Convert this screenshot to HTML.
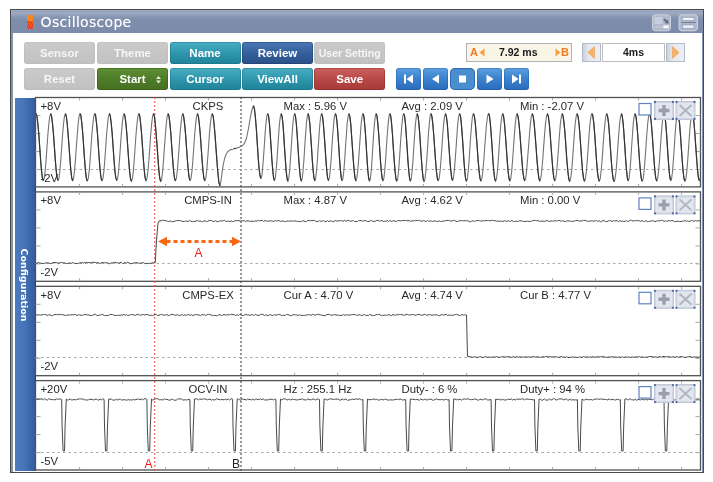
<!DOCTYPE html>
<html><head><meta charset="utf-8"><title>Oscilloscope</title><style>
*{margin:0;padding:0;box-sizing:border-box}
html,body{width:713px;height:482px;background:#fff;overflow:hidden}
body{position:relative;font-family:"Liberation Sans", Arial, sans-serif;}
#frame{position:absolute;left:10px;top:9px;width:694px;height:464px;border:1px solid #4a4a4a;background:#fff}
#frame .inner{position:absolute;left:0;top:0;right:0;bottom:0;border:2px solid #8493b0;border-bottom-width:0;border-right-width:1px}
#title{position:absolute;left:11px;top:10px;width:692px;height:23px;background:linear-gradient(#b4bdd0 0,#909db9 1px,#9eaac3 2.5px,#9ba7c0 4px,#8796b2 7px,#7e8dab 10px,#7c8ba9 100%);}
#title .t{position:absolute;left:29.6px;top:3.4px;font:14px/19px "DejaVu Sans", "Liberation Sans", sans-serif;color:#fff;letter-spacing:0.3px;text-shadow:0 0 1px rgba(255,255,255,.5)}
#logo{position:absolute;left:27px;top:15px}
.btn{position:absolute;width:71px;height:22px;border-radius:3px;color:#fff;font:bold 11.5px/22px "Liberation Sans", Arial, sans-serif;text-align:center;}
.grey{background:linear-gradient(#cacaca,#c1c1c1);color:#f6f6f6;box-shadow:inset 0 0 0 1px rgba(180,180,180,.25)}
.teal{background:linear-gradient(#4aaec3 0,#2f97ad 50%,#1f8298 100%);box-shadow:inset 0 0 0 1px rgba(20,100,120,.35)}
.blue{background:linear-gradient(#4a78b4 0,#34609c 50%,#2a4f86 100%);box-shadow:inset 0 0 0 1px rgba(20,50,100,.35)}
.green{background:linear-gradient(#5f8f33 0,#4f7d28 50%,#456f22 100%);box-shadow:inset 0 0 0 1px rgba(40,70,20,.35)}
.red{background:linear-gradient(#cc625e 0,#b94846 50%,#a83a38 100%);box-shadow:inset 0 0 0 1px rgba(120,30,30,.35)}
.pb{position:absolute;top:68px;width:25px;height:22px;border-radius:3px;background:linear-gradient(#5a9fde 0,#3c84cf 45%,#2a6bbb 100%);box-shadow:inset 0 0 0 1px rgba(30,80,150,.3)}
.pb.stop{border-radius:5px;background:#4b8ecf;box-shadow:inset 0 0 0 1px #2f6db3}
.pb svg{position:absolute;left:0;top:0}
#ab{position:absolute;left:466px;top:43px;width:106px;height:19px;border:1px solid #b2b2b2;background:#f8f4e6;}
#ab span{position:absolute;top:0;line-height:17px}
.arrbtn{position:absolute;top:43px;width:19px;height:19px;border:1px solid #b3bac8;background:linear-gradient(90deg,#ccd1dc,#e6e9f0 35%,#eceef3 100%)}
#tbox{position:absolute;left:602px;top:43px;width:63px;height:19px;border:1px solid #bdbdbd;background:#fff;font:bold 10.5px/17px "Liberation Sans", Arial, sans-serif;text-align:center;color:#1a1a1a}
#side{position:absolute;left:15px;top:98px;width:21px;height:372.5px;border-right:1px solid #1d3a6b;background:linear-gradient(90deg,#4b79bd 0,#4975b8 45%,#3d69ab 70%,#335c9b 100%)}
#side span{position:absolute;left:9px;top:186.5px;white-space:nowrap;transform:translate(-50%,-50%) rotate(90deg);color:#fff;font:bold 9.5px/12px "DejaVu Sans", "Liberation Sans", sans-serif;}
svg#sc{position:absolute;left:0;top:0}
#root{position:absolute;left:0;top:0;width:713px;height:482px;will-change:transform}
.lbl{font:11.3px "Liberation Sans", Arial, sans-serif;fill:#2a2a2a}
.ta{font:12px "Liberation Sans", Arial, sans-serif;fill:#f01a1a}
.tb{font:12px "Liberation Sans", Arial, sans-serif;fill:#222}
.abl{color:#f47a20;font:bold 11px/17px "Liberation Sans", Arial, sans-serif}
.abv{color:#1a1a1a;font:bold 10.5px/17px "Liberation Sans", Arial, sans-serif}
.icobtn{position:absolute;width:19px;height:18px;border-radius:2px;background:#dfe3ec;border:1px solid #c3c9d6}
</style></head><body>
<div id="root">
<div id="frame"><div class="inner"></div></div>
<div id="title"><span class="t">Oscilloscope</span></div><svg id="logo" width="6" height="14" viewBox="0 0 6 14"><rect width="6" height="14" fill="#f6851f"/><rect y="6" width="6" height="8" fill="#ee5a22"/><path d="M0 7h1v1h-1zM2 6.5h1v1h-1zM4 7.5h1v1h-1zM1 9h1v1h-1zM3 8.5h1v1h-1zM5 9.5h1v1h-1zM0 11h1v1h-1zM2 10.5h1v1h-1zM4 11.5h1v1h-1zM1 12.5h1v1h-1zM3 12.5h1v1.5h-1zM5 12h1v1h-1z" fill="#dc2a1c"/></svg>
<svg style="position:absolute;left:650px;top:12px" width="50" height="22" viewBox="650 12 50 22">
<rect x="652.5" y="14.8" width="18" height="16" rx="3" fill="#b0b9cd" stroke="#ccd3df"/>
<rect x="654.5" y="17" width="8" height="7" fill="#c6cddc"/>
<rect x="654.5" y="25.5" width="8" height="2.5" fill="#bcc4d6"/>
<rect x="663.3" y="25.3" width="5.5" height="3" fill="#f6f8fb"/>
<path d="M664.4 18.6 l2.6 2 l1-1.2 l0.8 4.2 l-4.2 -0.4 l1 -1.1 l-2.4 -2z" fill="#5f6c8a"/>
<rect x="679" y="14.8" width="18.5" height="16" rx="3" fill="#b0b9cd" stroke="#ccd3df"/>
<rect x="682.5" y="17.3" width="11.5" height="3.2" fill="#f2f4f8" stroke="#8d98b2" stroke-width="0.7"/>
<rect x="682.5" y="25" width="11.5" height="3.2" fill="#f2f4f8" stroke="#8d98b2" stroke-width="0.7"/>
<rect x="681" y="22" width="15" height="1" fill="#6f7c98"/>
</svg>
<div class="btn grey" style="left:24px;top:41.5px">Sensor</div>
<div class="btn grey" style="left:97px;top:41.5px">Theme</div>
<div class="btn teal" style="left:169.5px;top:41.5px">Name</div>
<div class="btn blue" style="left:242px;top:41.5px">Review</div>
<div class="btn grey" style="left:314.2px;top:41.5px"><span style="font-size:10.5px">User Setting</span></div>
<div class="btn grey" style="left:24px;top:68px">Reset</div>
<div class="btn green" style="left:97px;top:68px">Start<svg width="8" height="10" viewBox="0 0 8 10" style="position:absolute;left:58px;top:6.5px"><path d="M3.5 1 L6 4 H1Z M3.5 8.5 L6 5.5 H1Z" fill="#e4edd8"/></svg></div>
<div class="btn teal" style="left:169.5px;top:68px">Cursor</div>
<div class="btn teal" style="left:242px;top:68px">ViewAll</div>
<div class="btn red" style="left:314.2px;top:68px">Save</div>
<div class="pb" style="left:395.5px"><svg width="25" height="22" viewBox="0 0 25 22"><rect x="8" y="6.5" width="2" height="9" fill="#fff"/><path d="M17 6.5 L10.5 11 L17 15.5Z" fill="#fff"/></svg></div>
<div class="pb" style="left:422.5px"><svg width="25" height="22" viewBox="0 0 25 22"><path d="M16 6.5 L9 11 L16 15.5Z" fill="#fff"/></svg></div>
<div class="pb stop" style="left:449.5px"><svg width="25" height="22" viewBox="0 0 25 22"><rect x="9" y="7.5" width="7" height="7" fill="#fff"/></svg></div>
<div class="pb" style="left:476.5px"><svg width="25" height="22" viewBox="0 0 25 22"><path d="M9.5 6.5 L16.5 11 L9.5 15.5Z" fill="#fff"/></svg></div>
<div class="pb" style="left:503.5px"><svg width="25" height="22" viewBox="0 0 25 22"><rect x="15" y="6.5" width="2" height="9" fill="#fff"/><path d="M8 6.5 L14.5 11 L8 15.5Z" fill="#fff"/></svg></div>
<div id="ab"><span class="abl" style="left:3px">A</span>
<svg style="position:absolute;left:12px;top:4px" width="6" height="9" viewBox="0 0 6 9"><path d="M5.5 0.5 L0.5 4.5 L5.5 8.5Z" fill="#f6a04a"/></svg>
<span class="abv" style="left:32px">7.92 ms</span>
<svg style="position:absolute;left:88px;top:4px" width="6" height="9" viewBox="0 0 6 9"><path d="M0.5 0.5 L5.5 4.5 L0.5 8.5Z" fill="#f6a04a"/></svg>
<span class="abl" style="left:94px">B</span></div>
<div class="arrbtn" style="left:582px"><svg width="17" height="17" viewBox="0 0 17 17"><path d="M11.5 2.5 L5 8.5 L11.5 14.5Z" fill="#f6b264" stroke="#eea04a" stroke-width="0.6"/></svg></div>
<div id="tbox">4ms</div>
<div class="arrbtn" style="left:666px"><svg width="17" height="17" viewBox="0 0 17 17"><path d="M5.5 2.5 L12 8.5 L5.5 14.5Z" fill="#f6b264" stroke="#eea04a" stroke-width="0.6"/></svg></div>
<div id="side"><span>Configuration</span></div>
<svg id="sc" width="713" height="482" viewBox="0 0 713 482"><rect x="35.5" y="97.5" width="665.0" height="89.4" fill="#fff" stroke="#505050" stroke-width="1.3"/>
<path d="M79.6 98v2.5M79.6 186.4v-2.5M122.6 98v2.5M122.6 186.4v-2.5M165.6 98v2.5M165.6 186.4v-2.5M208.6 98v2.5M208.6 186.4v-2.5M251.6 98v2.5M251.6 186.4v-2.5M294.6 98v2.5M294.6 186.4v-2.5M337.6 98v2.5M337.6 186.4v-2.5M380.6 98v2.5M380.6 186.4v-2.5M423.6 98v2.5M423.6 186.4v-2.5M466.6 98v2.5M466.6 186.4v-2.5M509.6 98v2.5M509.6 186.4v-2.5M552.6 98v2.5M552.6 186.4v-2.5M595.6 98v2.5M595.6 186.4v-2.5M638.6 98v2.5M638.6 186.4v-2.5M681.6 98v2.5M681.6 186.4v-2.5M35.5 115.5h5M700.5 115.5h-5M35.5 133.5h5M700.5 133.5h-5M35.5 151.5h5M700.5 151.5h-5M35.5 169.5h5M700.5 169.5h-5" stroke="#a6a6a6" stroke-width="1" fill="none"/>
<rect x="35.5" y="191.9" width="665.0" height="89.4" fill="#fff" stroke="#505050" stroke-width="1.3"/>
<path d="M79.6 192.4v2.5M79.6 280.8v-2.5M122.6 192.4v2.5M122.6 280.8v-2.5M165.6 192.4v2.5M165.6 280.8v-2.5M208.6 192.4v2.5M208.6 280.8v-2.5M251.6 192.4v2.5M251.6 280.8v-2.5M294.6 192.4v2.5M294.6 280.8v-2.5M337.6 192.4v2.5M337.6 280.8v-2.5M380.6 192.4v2.5M380.6 280.8v-2.5M423.6 192.4v2.5M423.6 280.8v-2.5M466.6 192.4v2.5M466.6 280.8v-2.5M509.6 192.4v2.5M509.6 280.8v-2.5M552.6 192.4v2.5M552.6 280.8v-2.5M595.6 192.4v2.5M595.6 280.8v-2.5M638.6 192.4v2.5M638.6 280.8v-2.5M681.6 192.4v2.5M681.6 280.8v-2.5M35.5 209.9h5M700.5 209.9h-5M35.5 227.9h5M700.5 227.9h-5M35.5 245.9h5M700.5 245.9h-5M35.5 263.9h5M700.5 263.9h-5" stroke="#a6a6a6" stroke-width="1" fill="none"/>
<rect x="35.5" y="286.3" width="665.0" height="89.4" fill="#fff" stroke="#505050" stroke-width="1.3"/>
<path d="M79.6 286.8v2.5M79.6 375.20000000000005v-2.5M122.6 286.8v2.5M122.6 375.20000000000005v-2.5M165.6 286.8v2.5M165.6 375.20000000000005v-2.5M208.6 286.8v2.5M208.6 375.20000000000005v-2.5M251.6 286.8v2.5M251.6 375.20000000000005v-2.5M294.6 286.8v2.5M294.6 375.20000000000005v-2.5M337.6 286.8v2.5M337.6 375.20000000000005v-2.5M380.6 286.8v2.5M380.6 375.20000000000005v-2.5M423.6 286.8v2.5M423.6 375.20000000000005v-2.5M466.6 286.8v2.5M466.6 375.20000000000005v-2.5M509.6 286.8v2.5M509.6 375.20000000000005v-2.5M552.6 286.8v2.5M552.6 375.20000000000005v-2.5M595.6 286.8v2.5M595.6 375.20000000000005v-2.5M638.6 286.8v2.5M638.6 375.20000000000005v-2.5M681.6 286.8v2.5M681.6 375.20000000000005v-2.5M35.5 304.3h5M700.5 304.3h-5M35.5 322.3h5M700.5 322.3h-5M35.5 340.3h5M700.5 340.3h-5M35.5 358.3h5M700.5 358.3h-5" stroke="#a6a6a6" stroke-width="1" fill="none"/>
<rect x="35.5" y="380.6" width="665.0" height="89.4" fill="#fff" stroke="#505050" stroke-width="1.3"/>
<path d="M79.6 381.1v2.5M79.6 469.5v-2.5M122.6 381.1v2.5M122.6 469.5v-2.5M165.6 381.1v2.5M165.6 469.5v-2.5M208.6 381.1v2.5M208.6 469.5v-2.5M251.6 381.1v2.5M251.6 469.5v-2.5M294.6 381.1v2.5M294.6 469.5v-2.5M337.6 381.1v2.5M337.6 469.5v-2.5M380.6 381.1v2.5M380.6 469.5v-2.5M423.6 381.1v2.5M423.6 469.5v-2.5M466.6 381.1v2.5M466.6 469.5v-2.5M509.6 381.1v2.5M509.6 469.5v-2.5M552.6 381.1v2.5M552.6 469.5v-2.5M595.6 381.1v2.5M595.6 469.5v-2.5M638.6 381.1v2.5M638.6 469.5v-2.5M681.6 381.1v2.5M681.6 469.5v-2.5M35.5 398.6h5M700.5 398.6h-5M35.5 416.6h5M700.5 416.6h-5M35.5 434.6h5M700.5 434.6h-5M35.5 452.6h5M700.5 452.6h-5" stroke="#a6a6a6" stroke-width="1" fill="none"/>
<path d="M154.8 97V471" stroke="#ee3a36" stroke-width="1" stroke-dasharray="2 2" fill="none"/>
<path d="M241 97V471" stroke="#444" stroke-width="1.1" stroke-dasharray="2 2" fill="none"/>
<path d="M35.5 169.5H700.5" stroke="#a8a8a8" stroke-width="1" stroke-dasharray="2.5 3" fill="none"/>
<path d="M35.5 263.5H700.5" stroke="#a8a8a8" stroke-width="1" stroke-dasharray="2.5 3" fill="none"/>
<path d="M35.5 357.5H700.5" stroke="#a8a8a8" stroke-width="1" stroke-dasharray="2.5 3" fill="none"/>
<path d="M35.5 452.5H700.5" stroke="#a8a8a8" stroke-width="1" stroke-dasharray="2.5 3" fill="none"/>
<path d="M36.0 113.4 L36.9 115.9 L37.8 123.2 L38.8 134.1 L39.7 147.0 L40.6 159.8 L41.5 170.7 L42.4 178.0 L43.4 180.6 L44.3 178.0 L45.2 170.8 L46.1 159.9 L47.0 147.1 L47.9 134.3 L48.9 123.4 L49.8 116.1 L50.7 113.6 L51.6 116.3 L52.5 123.5 L53.5 134.4 L54.4 147.1 L55.3 159.9 L56.2 170.7 L57.1 177.9 L58.1 180.5 L59.0 177.9 L59.9 170.7 L60.8 159.8 L61.7 147.0 L62.6 134.2 L63.6 123.4 L64.5 116.1 L65.4 113.6 L66.3 116.2 L67.2 123.5 L68.1 134.4 L69.1 147.2 L70.0 160.1 L70.9 171.0 L71.8 178.3 L72.7 180.8 L73.6 178.3 L74.5 171.0 L75.4 160.1 L76.3 147.2 L77.3 134.4 L78.2 123.4 L79.1 116.2 L80.0 113.6 L80.9 115.7 L81.8 123.0 L82.8 134.0 L83.7 147.0 L84.6 160.0 L85.5 171.1 L86.4 178.4 L87.3 181.0 L88.3 178.4 L89.2 171.1 L90.1 160.2 L91.0 147.3 L91.9 134.4 L92.9 123.5 L93.8 116.2 L94.7 113.6 L95.6 115.6 L96.5 123.0 L97.5 134.0 L98.4 147.0 L99.3 160.0 L100.2 171.0 L101.1 178.3 L102.1 180.9 L103.0 178.4 L103.9 171.1 L104.8 160.1 L105.7 147.3 L106.6 134.4 L107.6 123.5 L108.5 116.2 L109.4 113.6 L110.3 115.7 L111.2 123.0 L112.2 133.9 L113.1 146.8 L114.0 159.7 L114.9 170.6 L115.8 177.9 L116.8 180.5 L117.7 178.0 L118.6 170.7 L119.5 159.9 L120.4 147.1 L121.3 134.3 L122.3 123.4 L123.2 116.1 L124.1 113.6 L125.0 116.1 L125.9 123.5 L126.9 134.5 L127.8 147.5 L128.7 160.4 L129.6 171.5 L130.5 178.8 L131.4 181.4 L132.4 178.8 L133.3 171.5 L134.2 160.5 L135.1 147.5 L136.0 134.5 L137.0 123.5 L137.9 116.2 L138.8 113.6 L139.7 115.7 L140.6 123.0 L141.6 134.0 L142.5 146.9 L143.4 159.8 L144.3 170.8 L145.2 178.1 L146.2 180.7 L147.1 178.1 L148.0 170.8 L148.9 160.0 L149.8 147.1 L150.7 134.3 L151.7 123.4 L152.6 116.2 L153.5 113.6 L154.4 116.3 L155.3 123.7 L156.2 134.7 L157.2 147.6 L158.1 160.6 L159.0 171.6 L159.9 179.0 L160.8 181.5 L161.7 179.0 L162.6 171.6 L163.5 160.6 L164.4 147.6 L165.4 134.6 L166.3 123.5 L167.2 116.2 L168.1 113.6 L169.0 116.2 L169.9 123.5 L170.9 134.4 L171.8 147.3 L172.7 160.1 L173.6 171.0 L174.5 178.3 L175.4 180.9 L176.4 178.3 L177.3 171.0 L178.2 160.1 L179.1 147.2 L180.0 134.4 L181.0 123.5 L181.9 116.2 L182.8 113.6 L183.7 116.7 L184.6 123.9 L185.6 134.6 L186.5 147.3 L187.4 160.0 L188.3 170.7 L189.2 177.9 L190.2 180.5 L191.1 177.9 L192.0 170.7 L192.9 159.8 L193.8 147.0 L194.7 134.2 L195.7 123.4 L196.6 116.1 L197.5 113.6 L198.4 116.6 L199.3 123.8 L200.3 134.6 L201.2 147.4 L202.1 160.2 L203.0 171.0 L203.9 178.2 L204.8 180.7 L205.8 178.2 L206.7 170.9 L207.6 160.0 L208.5 147.2 L209.4 134.3 L210.4 123.4 L211.3 116.2 L212.2 113.6 L213.2 116.3 L214.1 124.2 L215.1 135.9 L216.1 149.7 L217.1 163.5 L218.1 175.2 L219.0 183.1 L220.0 185.8 L221.0 181.0 L222.0 173.0 L223.2 165.0 L224.5 159.0 L226.0 154.5 L227.5 152.0 L229.0 150.6 L231.0 149.6 L233.0 149.3 L234.5 148.3 L236.0 148.6 L237.5 147.6 L239.0 147.4 L240.5 146.4 L242.0 145.8 L243.5 144.6 L245.0 142.4 L246.5 138.0 L248.0 131.0 L249.5 122.5 L251.0 114.0 L252.3 108.5 L253.5 105.8 L254.4 108.6 L255.3 116.4 L256.3 128.2 L257.2 142.1 L258.1 156.1 L259.0 167.9 L260.0 175.7 L260.9 178.5 L261.8 176.0 L262.6 169.0 L263.4 158.5 L264.3 146.1 L265.1 133.6 L266.0 123.1 L266.8 116.1 L267.7 113.6 L268.5 115.7 L269.4 123.0 L270.2 134.0 L271.1 146.9 L271.9 159.7 L272.8 170.7 L273.6 178.0 L274.4 180.5 L275.3 178.0 L276.1 170.7 L277.0 159.9 L277.8 147.1 L278.7 134.3 L279.5 123.4 L280.4 116.1 L281.2 113.6 L282.0 116.0 L282.9 123.3 L283.7 134.4 L284.5 147.4 L285.4 160.4 L286.2 171.4 L287.1 178.8 L287.9 181.4 L288.7 178.8 L289.6 171.5 L290.4 160.5 L291.2 147.5 L292.1 134.5 L292.9 123.5 L293.8 116.2 L294.6 113.6 L295.4 115.8 L296.3 123.2 L297.1 134.2 L298.0 147.2 L298.8 160.1 L299.7 171.2 L300.5 178.5 L301.4 181.1 L302.2 178.5 L303.0 171.2 L303.9 160.3 L304.7 147.3 L305.6 134.4 L306.4 123.5 L307.3 116.2 L308.1 113.6 L308.9 116.3 L309.8 123.6 L310.6 134.5 L311.5 147.3 L312.3 160.1 L313.2 171.0 L314.0 178.3 L314.9 180.8 L315.7 178.3 L316.5 171.0 L317.4 160.1 L318.2 147.2 L319.1 134.4 L319.9 123.4 L320.8 116.2 L321.6 113.6 L322.5 116.2 L323.3 123.4 L324.2 134.3 L325.1 147.1 L325.9 159.9 L326.8 170.7 L327.6 177.9 L328.5 180.5 L329.4 177.9 L330.2 170.7 L331.1 159.8 L331.9 147.0 L332.8 134.2 L333.7 123.4 L334.5 116.1 L335.4 113.6 L336.2 115.6 L337.1 123.0 L337.9 133.9 L338.8 146.9 L339.6 159.8 L340.5 170.8 L341.3 178.1 L342.1 180.6 L343.0 178.1 L343.8 170.8 L344.7 160.0 L345.5 147.1 L346.4 134.3 L347.2 123.4 L348.1 116.2 L348.9 113.6 L349.8 116.4 L350.7 123.6 L351.5 134.5 L352.4 147.4 L353.3 160.2 L354.2 171.1 L355.1 178.4 L355.9 180.9 L356.8 178.4 L357.7 171.1 L358.6 160.1 L359.5 147.3 L360.4 134.4 L361.2 123.5 L362.1 116.2 L363.0 113.6 L363.8 116.0 L364.6 123.3 L365.5 134.3 L366.3 147.2 L367.1 160.2 L367.9 171.2 L368.7 178.5 L369.6 181.1 L370.4 178.5 L371.2 171.2 L372.0 160.3 L372.8 147.4 L373.6 134.4 L374.5 123.5 L375.3 116.2 L376.1 113.6 L377.0 116.1 L377.8 123.4 L378.7 134.3 L379.6 147.2 L380.4 160.0 L381.3 170.9 L382.1 178.2 L383.0 180.8 L383.9 178.2 L384.7 170.9 L385.6 160.0 L386.4 147.2 L387.3 134.3 L388.2 123.4 L389.0 116.2 L389.9 113.6 L390.8 116.5 L391.6 123.8 L392.5 134.7 L393.3 147.6 L394.2 160.5 L395.1 171.4 L395.9 178.7 L396.8 181.2 L397.7 178.7 L398.5 171.3 L399.4 160.4 L400.2 147.4 L401.1 134.5 L402.0 123.5 L402.8 116.2 L403.7 113.6 L404.5 115.9 L405.4 123.2 L406.2 134.2 L407.1 147.2 L407.9 160.2 L408.8 171.2 L409.6 178.5 L410.4 181.1 L411.3 178.5 L412.1 171.2 L413.0 160.3 L413.8 147.3 L414.7 134.4 L415.5 123.5 L416.4 116.2 L417.2 113.6 L418.1 116.2 L418.9 123.6 L419.8 134.6 L420.6 147.5 L421.5 160.5 L422.4 171.5 L423.2 178.9 L424.1 181.5 L425.0 178.9 L425.8 171.5 L426.7 160.5 L427.6 147.5 L428.4 134.5 L429.3 123.5 L430.1 116.2 L431.0 113.6 L431.9 116.4 L432.8 123.7 L433.7 134.5 L434.6 147.3 L435.5 160.1 L436.4 171.0 L437.3 178.2 L438.2 180.7 L439.2 178.2 L440.1 170.9 L441.0 160.0 L441.9 147.2 L442.8 134.3 L443.7 123.4 L444.6 116.2 L445.5 113.6 L446.4 116.7 L447.3 123.9 L448.1 134.7 L449.0 147.4 L449.9 160.1 L450.8 170.8 L451.7 178.0 L452.6 180.5 L453.4 178.0 L454.3 170.7 L455.2 159.9 L456.1 147.1 L457.0 134.3 L457.8 123.4 L458.7 116.1 L459.6 113.6 L460.5 116.1 L461.3 123.4 L462.2 134.4 L463.1 147.4 L463.9 160.4 L464.8 171.4 L465.6 178.7 L466.5 181.3 L467.4 178.7 L468.2 171.4 L469.1 160.4 L469.9 147.5 L470.8 134.5 L471.7 123.5 L472.5 116.2 L473.4 113.6 L474.3 115.8 L475.3 123.1 L476.2 134.1 L477.2 147.1 L478.1 160.1 L479.1 171.1 L480.0 178.4 L480.9 181.0 L481.9 178.4 L482.8 171.1 L483.8 160.2 L484.7 147.3 L485.7 134.4 L486.6 123.5 L487.6 116.2 L488.5 113.6 L489.4 115.6 L490.3 123.0 L491.2 134.1 L492.1 147.1 L492.9 160.2 L493.8 171.2 L494.7 178.6 L495.6 181.2 L496.5 178.6 L497.4 171.3 L498.3 160.3 L499.1 147.4 L500.0 134.5 L500.9 123.5 L501.8 116.2 L502.7 113.6 L503.6 116.5 L504.5 123.8 L505.4 134.7 L506.3 147.5 L507.2 160.4 L508.1 171.3 L509.0 178.5 L509.9 181.1 L510.8 178.5 L511.7 171.2 L512.6 160.3 L513.5 147.3 L514.4 134.4 L515.3 123.5 L516.2 116.2 L517.1 113.6 L518.1 116.6 L519.0 123.8 L520.0 134.6 L520.9 147.4 L521.9 160.2 L522.8 171.0 L523.8 178.2 L524.7 180.8 L525.7 178.2 L526.6 170.9 L527.5 160.0 L528.5 147.2 L529.5 134.3 L530.4 123.4 L531.3 116.2 L532.3 113.6 L533.2 116.4 L534.2 123.7 L535.1 134.6 L536.1 147.5 L537.0 160.3 L538.0 171.3 L538.9 178.6 L539.8 181.1 L540.8 178.5 L541.7 171.2 L542.7 160.3 L543.6 147.4 L544.6 134.4 L545.5 123.5 L546.5 116.2 L547.4 113.6 L548.3 116.3 L549.3 123.5 L550.2 134.5 L551.1 147.3 L552.1 160.2 L553.0 171.1 L553.9 178.4 L554.8 180.9 L555.8 178.4 L556.7 171.1 L557.6 160.2 L558.6 147.3 L559.5 134.4 L560.4 123.5 L561.4 116.2 L562.3 113.6 L563.2 116.6 L564.1 123.9 L565.1 134.9 L566.0 147.8 L566.9 160.7 L567.9 171.6 L568.8 179.0 L569.7 181.5 L570.6 178.9 L571.6 171.6 L572.5 160.6 L573.4 147.6 L574.3 134.6 L575.2 123.5 L576.2 116.2 L577.1 113.6 L578.0 116.1 L579.0 123.5 L579.9 134.4 L580.8 147.4 L581.7 160.3 L582.6 171.3 L583.6 178.6 L584.5 181.2 L585.4 178.6 L586.4 171.3 L587.3 160.3 L588.2 147.4 L589.1 134.5 L590.0 123.5 L591.0 116.2 L591.9 113.6 L592.8 115.7 L593.8 123.1 L594.7 134.1 L595.6 147.2 L596.5 160.2 L597.4 171.3 L598.4 178.6 L599.3 181.2 L600.2 178.7 L601.1 171.3 L602.1 160.4 L603.0 147.4 L603.9 134.5 L604.9 123.5 L605.8 116.2 L606.7 113.6 L607.6 116.4 L608.6 123.7 L609.5 134.7 L610.4 147.7 L611.3 160.7 L612.2 171.7 L613.2 179.0 L614.1 181.6 L615.0 179.0 L616.0 171.6 L616.9 160.6 L617.8 147.6 L618.7 134.6 L619.6 123.6 L620.6 116.2 L621.5 113.6 L622.3 116.5 L623.2 123.8 L624.0 134.6 L624.9 147.4 L625.7 160.1 L626.6 171.0 L627.4 178.2 L628.2 180.7 L629.1 178.2 L629.9 170.9 L630.8 160.0 L631.6 147.2 L632.5 134.3 L633.3 123.4 L634.2 116.2 L635.0 113.6 L635.9 116.0 L636.8 123.4 L637.7 134.4 L638.6 147.3 L639.5 160.3 L640.4 171.3 L641.3 178.6 L642.2 181.2 L643.2 178.6 L644.1 171.3 L645.0 160.3 L645.9 147.4 L646.8 134.5 L647.7 123.5 L648.6 116.2 L649.5 113.6 L650.4 115.6 L651.3 123.0 L652.2 134.0 L653.1 147.0 L654.0 160.0 L654.9 171.0 L655.8 178.4 L656.8 181.0 L657.7 178.4 L658.6 171.1 L659.5 160.2 L660.4 147.3 L661.3 134.4 L662.2 123.5 L663.1 116.2 L664.0 113.6 L664.9 115.8 L665.7 123.1 L666.6 134.0 L667.4 146.9 L668.3 159.8 L669.1 170.7 L670.0 178.0 L670.9 180.5 L671.7 178.0 L672.6 170.7 L673.4 159.9 L674.3 147.1 L675.1 134.3 L676.0 123.4 L676.8 116.1 L677.7 113.6 L678.6 115.7 L679.5 123.1 L680.4 134.1 L681.3 147.2 L682.2 160.3 L683.1 171.3 L684.0 178.7 L685.0 181.3 L685.9 178.7 L686.8 171.4 L687.7 160.4 L688.6 147.5 L689.5 134.5 L690.4 123.5 L691.3 116.2 L692.2 113.6 L693.1 115.7 L694.0 123.0 L694.9 134.0 L695.8 146.9 L696.7 159.8 L697.6 170.8 L698.5 178.1 L699.4 180.7 L700.2 178.1" stroke="#737373" stroke-width="1.1" fill="none" stroke-linejoin="round"/>
<path d="M36.0 113.4L36.9 115.9L37.8 123.2L38.8 134.1L39.7 147.0L40.6 159.8L41.5 170.7L42.4 178.0L43.4 180.6M50.7 113.6L51.6 116.3L52.5 123.5L53.5 134.4L54.4 147.1L55.3 159.9L56.2 170.7L57.1 177.9L58.1 180.5M65.4 113.6L66.3 116.2L67.2 123.5L68.1 134.4L69.1 147.2L70.0 160.1L70.9 171.0L71.8 178.3L72.7 180.8M80.0 113.6L80.9 115.7L81.8 123.0L82.8 134.0L83.7 147.0L84.6 160.0L85.5 171.1L86.4 178.4L87.3 181.0M94.7 113.6L95.6 115.6L96.5 123.0L97.5 134.0L98.4 147.0L99.3 160.0L100.2 171.0L101.1 178.3L102.1 180.9M109.4 113.6L110.3 115.7L111.2 123.0L112.2 133.9L113.1 146.8L114.0 159.7L114.9 170.6L115.8 177.9L116.8 180.5M124.1 113.6L125.0 116.1L125.9 123.5L126.9 134.5L127.8 147.5L128.7 160.4L129.6 171.5L130.5 178.8L131.4 181.4M138.8 113.6L139.7 115.7L140.6 123.0L141.6 134.0L142.5 146.9L143.4 159.8L144.3 170.8L145.2 178.1L146.2 180.7M153.5 113.6L154.4 116.3L155.3 123.7L156.2 134.7L157.2 147.6L158.1 160.6L159.0 171.6L159.9 179.0L160.8 181.5M168.1 113.6L169.0 116.2L169.9 123.5L170.9 134.4L171.8 147.3L172.7 160.1L173.6 171.0L174.5 178.3L175.4 180.9M182.8 113.6L183.7 116.7L184.6 123.9L185.6 134.6L186.5 147.3L187.4 160.0L188.3 170.7L189.2 177.9L190.2 180.5M197.5 113.6L198.4 116.6L199.3 123.8L200.3 134.6L201.2 147.4L202.1 160.2L203.0 171.0L203.9 178.2L204.8 180.7M212.2 113.6L213.2 116.3L214.1 124.2L215.1 135.9L216.1 149.7L217.1 163.5L218.1 175.2L219.0 183.1L220.0 185.8M234.5 148.3L236.0 148.6M253.5 105.8L254.4 108.6L255.3 116.4L256.3 128.2L257.2 142.1L258.1 156.1L259.0 167.9L260.0 175.7L260.9 178.5M267.7 113.6L268.5 115.7L269.4 123.0L270.2 134.0L271.1 146.9L271.9 159.7L272.8 170.7L273.6 178.0L274.4 180.5M281.2 113.6L282.0 116.0L282.9 123.3L283.7 134.4L284.5 147.4L285.4 160.4L286.2 171.4L287.1 178.8L287.9 181.4M294.6 113.6L295.4 115.8L296.3 123.2L297.1 134.2L298.0 147.2L298.8 160.1L299.7 171.2L300.5 178.5L301.4 181.1M308.1 113.6L308.9 116.3L309.8 123.6L310.6 134.5L311.5 147.3L312.3 160.1L313.2 171.0L314.0 178.3L314.9 180.8M321.6 113.6L322.5 116.2L323.3 123.4L324.2 134.3L325.1 147.1L325.9 159.9L326.8 170.7L327.6 177.9L328.5 180.5M335.4 113.6L336.2 115.6L337.1 123.0L337.9 133.9L338.8 146.9L339.6 159.8L340.5 170.8L341.3 178.1L342.1 180.6M348.9 113.6L349.8 116.4L350.7 123.6L351.5 134.5L352.4 147.4L353.3 160.2L354.2 171.1L355.1 178.4L355.9 180.9M363.0 113.6L363.8 116.0L364.6 123.3L365.5 134.3L366.3 147.2L367.1 160.2L367.9 171.2L368.7 178.5L369.6 181.1M376.1 113.6L377.0 116.1L377.8 123.4L378.7 134.3L379.6 147.2L380.4 160.0L381.3 170.9L382.1 178.2L383.0 180.8M389.9 113.6L390.8 116.5L391.6 123.8L392.5 134.7L393.3 147.6L394.2 160.5L395.1 171.4L395.9 178.7L396.8 181.2M403.7 113.6L404.5 115.9L405.4 123.2L406.2 134.2L407.1 147.2L407.9 160.2L408.8 171.2L409.6 178.5L410.4 181.1M417.2 113.6L418.1 116.2L418.9 123.6L419.8 134.6L420.6 147.5L421.5 160.5L422.4 171.5L423.2 178.9L424.1 181.5M431.0 113.6L431.9 116.4L432.8 123.7L433.7 134.5L434.6 147.3L435.5 160.1L436.4 171.0L437.3 178.2L438.2 180.7M445.5 113.6L446.4 116.7L447.3 123.9L448.1 134.7L449.0 147.4L449.9 160.1L450.8 170.8L451.7 178.0L452.6 180.5M459.6 113.6L460.5 116.1L461.3 123.4L462.2 134.4L463.1 147.4L463.9 160.4L464.8 171.4L465.6 178.7L466.5 181.3M473.4 113.6L474.3 115.8L475.3 123.1L476.2 134.1L477.2 147.1L478.1 160.1L479.1 171.1L480.0 178.4L480.9 181.0M488.5 113.6L489.4 115.6L490.3 123.0L491.2 134.1L492.1 147.1L492.9 160.2L493.8 171.2L494.7 178.6L495.6 181.2M502.7 113.6L503.6 116.5L504.5 123.8L505.4 134.7L506.3 147.5L507.2 160.4L508.1 171.3L509.0 178.5L509.9 181.1M517.1 113.6L518.1 116.6L519.0 123.8L520.0 134.6L520.9 147.4L521.9 160.2L522.8 171.0L523.8 178.2L524.7 180.8M532.3 113.6L533.2 116.4L534.2 123.7L535.1 134.6L536.1 147.5L537.0 160.3L538.0 171.3L538.9 178.6L539.8 181.1M547.4 113.6L548.3 116.3L549.3 123.5L550.2 134.5L551.1 147.3L552.1 160.2L553.0 171.1L553.9 178.4L554.8 180.9M562.3 113.6L563.2 116.6L564.1 123.9L565.1 134.9L566.0 147.8L566.9 160.7L567.9 171.6L568.8 179.0L569.7 181.5M577.1 113.6L578.0 116.1L579.0 123.5L579.9 134.4L580.8 147.4L581.7 160.3L582.6 171.3L583.6 178.6L584.5 181.2M591.9 113.6L592.8 115.7L593.8 123.1L594.7 134.1L595.6 147.2L596.5 160.2L597.4 171.3L598.4 178.6L599.3 181.2M606.7 113.6L607.6 116.4L608.6 123.7L609.5 134.7L610.4 147.7L611.3 160.7L612.2 171.7L613.2 179.0L614.1 181.6M621.5 113.6L622.3 116.5L623.2 123.8L624.0 134.6L624.9 147.4L625.7 160.1L626.6 171.0L627.4 178.2L628.2 180.7M635.0 113.6L635.9 116.0L636.8 123.4L637.7 134.4L638.6 147.3L639.5 160.3L640.4 171.3L641.3 178.6L642.2 181.2M649.5 113.6L650.4 115.6L651.3 123.0L652.2 134.0L653.1 147.0L654.0 160.0L654.9 171.0L655.8 178.4L656.8 181.0M664.0 113.6L664.9 115.8L665.7 123.1L666.6 134.0L667.4 146.9L668.3 159.8L669.1 170.7L670.0 178.0L670.9 180.5M677.7 113.6L678.6 115.7L679.5 123.1L680.4 134.1L681.3 147.2L682.2 160.3L683.1 171.3L684.0 178.7L685.0 181.3M692.2 113.6L693.1 115.7L694.0 123.0L694.9 134.0L695.8 146.9L696.7 159.8L697.6 170.8L698.5 178.1L699.4 180.7" stroke="#333" stroke-width="1.15" fill="none" stroke-linejoin="round"/>
<path d="M35.5 262.8 L36.8 263.5 L38.1 262.4 L39.4 262.9 L40.7 263.1 L42.0 263.5 L43.3 263.4 L44.6 263.5 L45.9 262.7 L47.2 262.9 L48.5 262.8 L49.8 263.5 L51.1 263.6 L52.4 262.5 L53.7 262.5 L55.0 262.6 L56.3 262.6 L57.6 263.0 L58.9 263.1 L60.2 262.7 L61.5 262.3 L62.8 262.9 L64.1 262.8 L65.4 263.1 L66.7 263.6 L68.0 263.3 L69.3 263.0 L70.6 263.2 L71.9 263.2 L73.2 262.4 L74.5 263.6 L75.8 263.4 L77.1 263.5 L78.4 263.4 L79.7 262.8 L81.0 262.9 L82.3 262.4 L83.6 263.2 L84.9 262.4 L86.2 262.4 L87.5 262.6 L88.8 262.5 L90.1 262.8 L91.4 262.4 L92.7 262.3 L94.0 262.5 L95.3 262.4 L96.6 262.8 L97.9 262.3 L99.2 263.5 L100.5 263.2 L101.8 262.5 L103.1 262.7 L104.4 262.8 L105.7 262.8 L107.0 262.5 L108.3 263.5 L109.6 263.7 L110.9 263.0 L112.2 263.0 L113.5 262.4 L114.8 262.4 L116.1 262.8 L117.4 262.7 L118.7 263.5 L120.0 262.5 L121.3 262.3 L122.6 263.6 L123.9 263.0 L125.2 262.5 L126.5 263.1 L127.8 262.3 L129.1 263.0 L130.4 263.7 L131.7 263.5 L133.0 263.3 L134.3 262.7 L135.6 262.8 L136.9 262.5 L138.2 263.4 L139.5 263.0 L140.8 263.4 L142.1 262.8 L143.4 262.6 L144.7 263.4 L146.0 263.7 L147.3 263.5 L148.6 263.4 L149.9 263.4 L151.2 263.3 L152.5 262.6 L153.8 263.0 L155.3 262.5 L156.5 240.0 L158.0 223.0 L159.0 221.0 L161.0 220.8 L162.3 220.3 L163.6 220.3 L164.9 220.7 L166.2 220.7 L167.5 221.3 L168.8 221.6 L170.1 220.9 L171.4 221.6 L172.7 221.7 L174.0 221.6 L175.3 220.8 L176.6 220.6 L177.9 220.6 L179.2 220.6 L180.5 220.6 L181.8 221.2 L183.1 221.6 L184.4 221.5 L185.7 221.0 L187.0 221.2 L188.3 221.4 L189.6 220.4 L190.9 221.2 L192.2 221.6 L193.5 221.4 L194.8 221.4 L196.1 221.0 L197.4 220.5 L198.7 221.4 L200.0 220.8 L201.3 221.4 L202.6 221.7 L203.9 220.9 L205.2 220.9 L206.5 221.6 L207.8 221.3 L209.1 220.5 L210.4 220.5 L211.7 220.5 L213.0 221.6 L214.3 221.4 L215.6 220.5 L216.9 221.5 L218.2 221.7 L219.5 221.2 L220.8 220.8 L222.1 221.1 L223.4 220.5 L224.7 220.3 L226.0 221.7 L227.3 221.2 L228.6 221.0 L229.9 221.6 L231.2 220.9 L232.5 221.5 L233.8 221.5 L235.1 220.6 L236.4 220.7 L237.7 220.7 L239.0 220.6 L240.3 221.1 L241.6 220.7 L242.9 220.9 L244.2 220.5 L245.5 221.6 L246.8 220.8 L248.1 220.9 L249.4 221.1 L250.7 221.6 L252.0 220.9 L253.3 221.6 L254.6 221.0 L255.9 221.0 L257.2 221.0 L258.5 220.3 L259.8 220.9 L261.1 220.6 L262.4 220.3 L263.7 221.4 L265.0 220.5 L266.3 221.0 L267.6 221.3 L268.9 221.1 L270.2 220.8 L271.5 221.0 L272.8 221.1 L274.1 221.4 L275.4 220.4 L276.7 221.1 L278.0 220.6 L279.3 220.7 L280.6 221.4 L281.9 221.0 L283.2 221.1 L284.5 221.4 L285.8 221.6 L287.1 220.9 L288.4 221.2 L289.7 221.0 L291.0 221.0 L292.3 221.3 L293.6 220.9 L294.9 221.0 L296.2 221.0 L297.5 221.6 L298.8 221.3 L300.1 221.5 L301.4 221.6 L302.7 220.7 L304.0 221.1 L305.3 221.6 L306.6 221.5 L307.9 220.5 L309.2 220.5 L310.5 220.9 L311.8 220.4 L313.1 220.6 L314.4 220.4 L315.7 221.2 L317.0 221.4 L318.3 221.6 L319.6 220.5 L320.9 221.3 L322.2 221.2 L323.5 220.5 L324.8 221.5 L326.1 221.7 L327.4 220.6 L328.7 221.6 L330.0 220.9 L331.3 221.0 L332.6 221.7 L333.9 221.5 L335.2 220.5 L336.5 220.9 L337.8 221.0 L339.1 220.8 L340.4 220.6 L341.7 220.7 L343.0 221.3 L344.3 220.3 L345.6 221.1 L346.9 220.9 L348.2 220.3 L349.5 220.8 L350.8 221.2 L352.1 221.0 L353.4 220.4 L354.7 221.7 L356.0 221.4 L357.3 221.7 L358.6 220.4 L359.9 220.7 L361.2 220.4 L362.5 221.4 L363.8 220.7 L365.1 220.5 L366.4 220.9 L367.7 221.6 L369.0 221.4 L370.3 220.7 L371.6 220.5 L372.9 221.6 L374.2 221.1 L375.5 221.3 L376.8 220.4 L378.1 220.4 L379.4 221.3 L380.7 220.9 L382.0 220.4 L383.3 221.6 L384.6 221.2 L385.9 221.4 L387.2 220.4 L388.5 221.5 L389.8 220.4 L391.1 221.5 L392.4 220.9 L393.7 220.8 L395.0 221.1 L396.3 221.6 L397.6 220.7 L398.9 220.5 L400.2 221.0 L401.5 220.6 L402.8 220.5 L404.1 220.5 L405.4 220.4 L406.7 220.6 L408.0 220.7 L409.3 220.7 L410.6 221.4 L411.9 220.7 L413.2 221.0 L414.5 220.5 L415.8 220.8 L417.1 220.3 L418.4 220.7 L419.7 220.3 L421.0 221.3 L422.3 221.1 L423.6 220.6 L424.9 221.0 L426.2 221.6 L427.5 220.4 L428.8 221.4 L430.1 220.9 L431.4 221.0 L432.7 221.5 L434.0 220.9 L435.3 221.0 L436.6 221.3 L437.9 221.7 L439.2 220.8 L440.5 221.5 L441.8 221.3 L443.1 221.2 L444.4 220.9 L445.7 220.8 L447.0 220.4 L448.3 220.5 L449.6 220.4 L450.9 221.3 L452.2 220.7 L453.5 220.5 L454.8 220.4 L456.1 221.5 L457.4 221.5 L458.7 221.2 L460.0 220.7 L461.3 220.6 L462.6 220.7 L463.9 220.9 L465.2 220.5 L466.5 220.9 L467.8 220.7 L469.1 221.6 L470.4 221.7 L471.7 221.1 L473.0 220.6 L474.3 221.7 L475.6 220.7 L476.9 220.8 L478.2 220.3 L479.5 220.8 L480.8 221.0 L482.1 221.0 L483.4 220.6 L484.7 221.0 L486.0 220.3 L487.3 220.7 L488.6 220.4 L489.9 220.9 L491.2 220.4 L492.5 220.3 L493.8 220.7 L495.1 220.6 L496.4 221.1 L497.7 221.0 L499.0 221.4 L500.3 221.2 L501.6 221.3 L502.9 221.5 L504.2 220.8 L505.5 220.8 L506.8 221.7 L508.1 220.5 L509.4 221.3 L510.7 221.2 L512.0 220.4 L513.3 221.5 L514.6 221.5 L515.9 221.2 L517.2 221.3 L518.5 221.4 L519.8 220.5 L521.1 221.0 L522.4 221.0 L523.7 221.5 L525.0 221.4 L526.3 221.5 L527.6 221.1 L528.9 221.5 L530.2 221.3 L531.5 221.3 L532.8 220.6 L534.1 220.3 L535.4 220.5 L536.7 220.8 L538.0 220.4 L539.3 221.5 L540.6 221.1 L541.9 221.2 L543.2 221.2 L544.5 221.3 L545.8 221.0 L547.1 220.3 L548.4 221.4 L549.7 221.3 L551.0 221.0 L552.3 221.0 L553.6 221.2 L554.9 220.4 L556.2 221.3 L557.5 220.7 L558.8 220.4 L560.1 220.7 L561.4 221.3 L562.7 220.6 L564.0 221.3 L565.3 221.7 L566.6 221.0 L567.9 220.8 L569.2 221.0 L570.5 221.3 L571.8 221.4 L573.1 221.2 L574.4 221.2 L575.7 220.4 L577.0 220.5 L578.3 220.7 L579.6 221.3 L580.9 220.7 L582.2 221.1 L583.5 220.3 L584.8 220.4 L586.1 220.7 L587.4 221.2 L588.7 221.3 L590.0 221.2 L591.3 220.7 L592.6 221.0 L593.9 221.0 L595.2 221.0 L596.5 220.5 L597.8 221.6 L599.1 220.6 L600.4 221.7 L601.7 221.6 L603.0 220.3 L604.3 220.9 L605.6 221.4 L606.9 221.7 L608.2 220.9 L609.5 220.7 L610.8 220.6 L612.1 221.6 L613.4 220.6 L614.7 221.1 L616.0 220.5 L617.3 221.0 L618.6 221.6 L619.9 220.5 L621.2 221.4 L622.5 221.0 L623.8 221.5 L625.1 221.3 L626.4 220.6 L627.7 221.6 L629.0 221.0 L630.3 220.3 L631.6 220.3 L632.9 221.0 L634.2 220.9 L635.5 220.7 L636.8 220.5 L638.1 220.8 L639.4 220.7 L640.7 221.5 L642.0 220.3 L643.3 221.4 L644.6 221.5 L645.9 220.5 L647.2 221.6 L648.5 221.3 L649.8 221.6 L651.1 220.7 L652.4 220.8 L653.7 220.9 L655.0 221.7 L656.3 221.1 L657.6 220.8 L658.9 220.9 L660.2 220.7 L661.5 220.4 L662.8 220.4 L664.1 221.5 L665.4 220.7 L666.7 221.6 L668.0 220.6 L669.3 220.7 L670.6 221.0 L671.9 220.6 L673.2 220.8 L674.5 221.6 L675.8 221.5 L677.1 221.4 L678.4 221.2 L679.7 221.6 L681.0 221.6 L682.3 221.1 L683.6 221.3 L684.9 220.4 L686.2 221.3 L687.5 220.9 L688.8 221.4 L690.1 221.2 L691.4 220.7 L692.7 220.4 L694.0 221.6 L695.3 220.5 L696.6 221.0 L697.9 220.8 L699.2 220.7 L700.5 221.3 L700.5 221.0" stroke="#4a4a4a" stroke-width="1" fill="none"/>
<path d="M166.5 241.5H233" stroke="#fb6610" stroke-width="3" stroke-dasharray="4 3" fill="none"/>
<path d="M158 241.5 L167 236.7 V246.3Z M241 241.5 L232 236.7 V246.3Z" fill="#fb6610"/>
<text x="198.5" y="256.5" text-anchor="middle" class="ta">A</text>
<path d="M35.5 315.7 L36.8 314.7 L38.1 315.2 L39.4 314.7 L40.7 315.1 L42.0 314.9 L43.3 314.5 L44.6 314.5 L45.9 314.6 L47.2 315.6 L48.5 315.0 L49.8 314.6 L51.1 315.6 L52.4 315.7 L53.7 314.9 L55.0 314.5 L56.3 314.6 L57.6 314.4 L58.9 314.8 L60.2 314.4 L61.5 314.6 L62.8 314.7 L64.1 315.1 L65.4 315.5 L66.7 315.3 L68.0 314.9 L69.3 314.9 L70.6 315.0 L71.9 314.8 L73.2 314.8 L74.5 314.4 L75.8 314.7 L77.1 315.7 L78.4 314.5 L79.7 315.0 L81.0 315.2 L82.3 315.5 L83.6 314.6 L84.9 314.7 L86.2 314.6 L87.5 314.9 L88.8 314.9 L90.1 315.6 L91.4 315.5 L92.7 315.5 L94.0 314.3 L95.3 314.3 L96.6 315.3 L97.9 315.6 L99.2 315.0 L100.5 315.1 L101.8 314.3 L103.1 314.8 L104.4 315.6 L105.7 315.5 L107.0 315.5 L108.3 315.7 L109.6 314.6 L110.9 314.5 L112.2 314.5 L113.5 315.0 L114.8 315.3 L116.1 315.6 L117.4 315.3 L118.7 315.2 L120.0 315.4 L121.3 314.9 L122.6 315.1 L123.9 314.4 L125.2 315.4 L126.5 314.6 L127.8 315.6 L129.1 315.2 L130.4 314.7 L131.7 314.5 L133.0 314.7 L134.3 315.2 L135.6 315.3 L136.9 314.5 L138.2 314.4 L139.5 315.0 L140.8 315.1 L142.1 314.8 L143.4 314.6 L144.7 315.1 L146.0 314.3 L147.3 314.7 L148.6 314.9 L149.9 315.6 L151.2 315.2 L152.5 315.5 L153.8 315.0 L155.1 314.6 L156.4 314.6 L157.7 315.6 L159.0 315.3 L160.3 314.7 L161.6 314.3 L162.9 315.0 L164.2 315.2 L165.5 314.9 L166.8 314.7 L168.1 315.2 L169.4 315.6 L170.7 314.6 L172.0 314.3 L173.3 314.8 L174.6 314.9 L175.9 315.3 L177.2 314.6 L178.5 315.4 L179.8 315.3 L181.1 315.0 L182.4 314.6 L183.7 315.7 L185.0 314.7 L186.3 315.4 L187.6 314.6 L188.9 314.6 L190.2 315.4 L191.5 314.7 L192.8 315.6 L194.1 315.0 L195.4 314.6 L196.7 314.6 L198.0 314.9 L199.3 315.2 L200.6 315.6 L201.9 314.5 L203.2 314.9 L204.5 314.6 L205.8 315.7 L207.1 314.5 L208.4 314.4 L209.7 314.4 L211.0 314.9 L212.3 315.6 L213.6 315.5 L214.9 315.3 L216.2 315.7 L217.5 315.6 L218.8 314.8 L220.1 314.6 L221.4 315.6 L222.7 315.3 L224.0 314.3 L225.3 315.2 L226.6 314.8 L227.9 314.8 L229.2 314.8 L230.5 314.5 L231.8 314.3 L233.1 314.7 L234.4 314.8 L235.7 315.6 L237.0 314.5 L238.3 315.6 L239.6 314.6 L240.9 314.8 L242.2 315.5 L243.5 315.5 L244.8 314.9 L246.1 314.4 L247.4 315.0 L248.7 314.8 L250.0 315.6 L251.3 314.6 L252.6 314.8 L253.9 315.6 L255.2 314.3 L256.5 314.9 L257.8 315.4 L259.1 315.4 L260.4 314.4 L261.7 314.3 L263.0 314.4 L264.3 315.6 L265.6 314.7 L266.9 315.3 L268.2 315.6 L269.5 314.8 L270.8 314.7 L272.1 315.6 L273.4 315.2 L274.7 314.7 L276.0 315.3 L277.3 314.7 L278.6 314.7 L279.9 314.3 L281.2 315.4 L282.5 315.6 L283.8 315.2 L285.1 315.6 L286.4 314.3 L287.7 314.6 L289.0 315.0 L290.3 315.6 L291.6 315.6 L292.9 314.8 L294.2 314.7 L295.5 314.9 L296.8 315.0 L298.1 315.6 L299.4 314.6 L300.7 315.4 L302.0 315.3 L303.3 315.5 L304.6 315.4 L305.9 315.2 L307.2 314.8 L308.5 314.7 L309.8 314.8 L311.1 315.4 L312.4 314.4 L313.7 314.6 L315.0 315.4 L316.3 314.6 L317.6 314.4 L318.9 314.3 L320.2 315.1 L321.5 314.8 L322.8 315.7 L324.1 315.5 L325.4 315.7 L326.7 314.7 L328.0 314.4 L329.3 314.4 L330.6 315.0 L331.9 315.3 L333.2 314.9 L334.5 314.6 L335.8 314.9 L337.1 315.2 L338.4 315.2 L339.7 315.3 L341.0 315.5 L342.3 315.2 L343.6 314.5 L344.9 315.5 L346.2 314.7 L347.5 315.1 L348.8 314.8 L350.1 315.3 L351.4 314.6 L352.7 314.6 L354.0 314.6 L355.3 314.5 L356.6 315.5 L357.9 315.1 L359.2 314.8 L360.5 314.9 L361.8 315.7 L363.1 315.0 L364.4 314.6 L365.7 315.4 L367.0 315.2 L368.3 315.7 L369.6 314.4 L370.9 315.0 L372.2 315.4 L373.5 315.5 L374.8 315.6 L376.1 314.4 L377.4 314.7 L378.7 314.5 L380.0 314.6 L381.3 315.7 L382.6 315.1 L383.9 315.6 L385.2 314.8 L386.5 315.5 L387.8 314.9 L389.1 314.7 L390.4 315.4 L391.7 315.6 L393.0 314.4 L394.3 315.1 L395.6 315.2 L396.9 314.6 L398.2 314.8 L399.5 314.5 L400.8 314.6 L402.1 314.7 L403.4 315.1 L404.7 315.2 L406.0 314.6 L407.3 314.3 L408.6 314.8 L409.9 315.2 L411.2 314.6 L412.5 314.7 L413.8 314.6 L415.1 315.4 L416.4 315.1 L417.7 314.4 L419.0 314.4 L420.3 314.9 L421.6 315.1 L422.9 315.2 L424.2 314.4 L425.5 314.5 L426.8 315.3 L428.1 314.9 L429.4 314.7 L430.7 314.7 L432.0 315.6 L433.3 314.7 L434.6 315.1 L435.9 314.8 L437.2 314.9 L438.5 315.5 L439.8 315.7 L441.1 314.8 L442.4 314.6 L443.7 315.3 L445.0 314.6 L446.3 314.3 L447.6 315.6 L448.9 314.9 L450.2 315.4 L451.5 314.9 L452.8 315.5 L454.1 314.9 L455.4 314.5 L456.7 314.3 L458.0 315.1 L459.3 315.2 L460.6 315.6 L461.9 314.4 L463.2 315.2 L464.5 314.8 L465.8 315.0 L466.5 315.0 L467.5 356.5 L469.0 356.6 L470.3 356.8 L471.6 357.0 L472.9 357.4 L474.2 356.6 L475.5 357.0 L476.8 357.3 L478.1 357.5 L479.4 356.7 L480.7 356.6 L482.0 357.4 L483.3 357.5 L484.6 357.0 L485.9 356.6 L487.2 357.4 L488.5 356.9 L489.8 357.4 L491.1 357.1 L492.4 357.3 L493.7 356.7 L495.0 357.3 L496.3 356.7 L497.6 356.9 L498.9 357.3 L500.2 357.3 L501.5 356.7 L502.8 356.7 L504.1 356.9 L505.4 357.0 L506.7 356.9 L508.0 356.6 L509.3 356.7 L510.6 357.2 L511.9 357.4 L513.2 356.5 L514.5 357.1 L515.8 357.3 L517.1 356.5 L518.4 357.3 L519.7 356.6 L521.0 357.1 L522.3 357.1 L523.6 357.1 L524.9 356.8 L526.2 356.9 L527.5 357.1 L528.8 356.9 L530.1 357.2 L531.4 356.9 L532.7 356.9 L534.0 356.5 L535.3 357.1 L536.6 357.0 L537.9 356.7 L539.2 357.3 L540.5 357.3 L541.8 357.0 L543.1 356.7 L544.4 357.0 L545.7 356.6 L547.0 356.6 L548.3 356.9 L549.6 356.6 L550.9 356.9 L552.2 357.0 L553.5 356.5 L554.8 357.1 L556.1 356.6 L557.4 357.2 L558.7 357.3 L560.0 357.0 L561.3 356.6 L562.6 357.0 L563.9 356.9 L565.2 357.5 L566.5 356.6 L567.8 357.4 L569.1 357.5 L570.4 357.2 L571.7 357.3 L573.0 356.7 L574.3 357.5 L575.6 357.0 L576.9 357.5 L578.2 357.4 L579.5 356.7 L580.8 357.3 L582.1 357.4 L583.4 356.6 L584.7 356.9 L586.0 357.3 L587.3 356.7 L588.6 357.4 L589.9 356.8 L591.2 357.3 L592.5 356.6 L593.8 357.0 L595.1 357.4 L596.4 356.7 L597.7 356.8 L599.0 357.0 L600.3 356.8 L601.6 356.5 L602.9 356.7 L604.2 356.7 L605.5 357.4 L606.8 357.2 L608.1 357.4 L609.4 356.7 L610.7 357.3 L612.0 356.6 L613.3 357.0 L614.6 357.1 L615.9 356.9 L617.2 357.4 L618.5 357.1 L619.8 357.1 L621.1 357.4 L622.4 356.6 L623.7 357.5 L625.0 357.1 L626.3 356.9 L627.6 357.3 L628.9 356.8 L630.2 357.5 L631.5 357.1 L632.8 356.9 L634.1 357.3 L635.4 356.9 L636.7 356.7 L638.0 357.2 L639.3 356.5 L640.6 357.3 L641.9 356.8 L643.2 357.1 L644.5 357.5 L645.8 357.1 L647.1 357.2 L648.4 356.8 L649.7 356.5 L651.0 356.5 L652.3 356.6 L653.6 357.1 L654.9 356.9 L656.2 357.0 L657.5 357.4 L658.8 356.6 L660.1 356.7 L661.4 357.2 L662.7 356.5 L664.0 356.5 L665.3 356.9 L666.6 356.6 L667.9 356.9 L669.2 356.7 L670.5 357.1 L671.8 357.1 L673.1 356.7 L674.4 357.1 L675.7 357.0 L677.0 356.6 L678.3 357.4 L679.6 356.7 L680.9 356.6 L682.2 356.6 L683.5 357.1 L684.8 357.4 L686.1 357.3 L687.4 356.9 L688.7 356.8 L690.0 356.5 L691.3 357.1 L692.6 357.1 L693.9 356.9 L695.2 357.1 L696.5 356.9 L697.8 357.4 L699.1 357.2 L700.4 356.7 L700.5 357.0" stroke="#4a4a4a" stroke-width="1" fill="none"/>
<path d="M35.5 400.1 L36.8 398.8 L38.1 399.6 L39.4 399.3 L40.7 399.1 L42.0 398.8 L43.3 399.9 L44.6 398.7 L45.9 399.6 L47.2 400.2 L48.5 398.9 L49.8 399.0 L51.1 399.7 L52.4 399.5 L53.7 399.7 L55.0 400.0 L56.3 399.0 L57.6 399.2 L58.9 399.2 L60.2 398.8 L61.5 400.1 L61.7 399.5 L62.1 426.0 L63.1 451.0 L64.5 451.0 L65.1 426.0 L66.3 399.0 L67.6 400.0 L68.9 399.8 L70.2 398.7 L71.5 400.1 L72.8 399.9 L74.1 399.4 L75.4 399.9 L76.7 399.4 L78.0 399.1 L79.3 398.9 L80.6 399.1 L81.9 398.8 L83.2 399.2 L84.5 399.9 L85.8 399.8 L87.1 400.1 L88.4 399.8 L89.7 399.1 L91.0 399.6 L92.3 399.4 L93.6 400.0 L94.9 399.5 L96.2 399.1 L97.5 399.7 L98.8 400.2 L100.1 399.0 L101.4 400.1 L102.7 398.7 L104.1 399.5 L104.5 426.0 L105.5 451.0 L106.9 451.0 L107.5 426.0 L108.7 399.0 L110.0 399.1 L111.3 399.1 L112.6 399.9 L113.9 400.2 L115.2 399.9 L116.5 399.2 L117.8 400.1 L119.1 399.2 L120.4 399.1 L121.7 400.2 L123.0 399.7 L124.3 399.8 L125.6 399.8 L126.9 400.3 L128.2 399.5 L129.5 400.0 L130.8 399.8 L132.1 400.1 L133.4 399.4 L134.7 399.9 L136.0 399.6 L137.3 399.2 L138.6 399.0 L139.9 399.7 L141.2 398.8 L142.5 400.2 L143.8 398.9 L145.1 398.7 L146.4 398.9 L146.9 399.5 L147.3 426.0 L148.3 451.0 L149.7 451.0 L150.3 426.0 L151.5 399.0 L152.8 400.2 L154.1 399.3 L155.4 398.9 L156.7 398.7 L158.0 398.8 L159.3 399.8 L160.6 399.7 L161.9 399.8 L163.2 399.9 L164.5 398.8 L165.8 399.6 L167.1 399.3 L168.4 400.0 L169.7 400.0 L171.0 400.1 L172.3 398.8 L173.6 400.1 L174.9 400.2 L176.2 400.2 L177.5 398.9 L178.8 399.0 L180.1 398.9 L181.4 398.8 L182.7 400.1 L184.0 400.0 L185.3 399.7 L186.6 400.0 L187.9 399.7 L189.2 399.2 L189.9 399.5 L190.3 426.0 L191.3 451.0 L192.7 451.0 L193.3 426.0 L194.5 399.0 L195.8 398.9 L197.1 398.9 L198.4 399.9 L199.7 399.0 L201.0 399.2 L202.3 399.4 L203.6 398.7 L204.9 399.1 L206.2 399.2 L207.5 399.8 L208.8 399.3 L210.1 399.2 L211.4 400.2 L212.7 399.5 L214.0 400.1 L215.3 399.7 L216.6 398.7 L217.9 399.4 L219.2 399.4 L220.5 399.9 L221.8 399.3 L223.1 399.8 L224.4 399.6 L225.7 399.0 L227.0 400.1 L228.3 398.8 L229.6 400.0 L230.9 399.0 L232.2 398.7 L232.6 399.5 L233.0 426.0 L234.0 451.0 L235.4 451.0 L236.0 426.0 L237.2 399.0 L238.5 399.0 L239.8 399.9 L241.1 400.3 L242.4 398.7 L243.7 399.5 L245.0 399.5 L246.3 400.0 L247.6 399.0 L248.9 399.5 L250.2 399.3 L251.5 400.0 L252.8 399.1 L254.1 400.2 L255.4 399.2 L256.7 399.0 L258.0 399.8 L259.3 399.5 L260.6 398.9 L261.9 399.7 L263.2 398.8 L264.5 400.0 L265.8 399.8 L267.1 400.0 L268.4 399.7 L269.7 399.3 L271.0 399.3 L272.3 399.3 L273.6 400.1 L274.9 398.8 L275.9 399.5 L276.3 426.0 L277.3 451.0 L278.7 451.0 L279.3 426.0 L280.5 399.0 L281.8 400.1 L283.1 398.7 L284.4 399.0 L285.7 399.1 L287.0 400.1 L288.3 399.5 L289.6 399.3 L290.9 400.1 L292.2 399.1 L293.5 399.4 L294.8 399.6 L296.1 399.9 L297.4 399.9 L298.7 399.7 L300.0 399.3 L301.3 399.2 L302.6 398.9 L303.9 400.0 L305.2 399.8 L306.5 399.9 L307.8 399.0 L309.1 399.4 L310.4 399.9 L311.7 399.6 L313.0 398.9 L314.3 399.4 L315.6 400.1 L316.9 399.1 L318.2 399.0 L319.5 399.5 L319.9 426.0 L320.9 451.0 L322.3 451.0 L322.9 426.0 L324.1 399.0 L325.4 399.2 L326.7 399.8 L328.0 400.0 L329.3 398.9 L330.6 398.9 L331.9 399.1 L333.2 399.2 L334.5 399.5 L335.8 399.0 L337.1 399.2 L338.4 399.0 L339.7 400.3 L341.0 399.9 L342.3 398.9 L343.6 400.2 L344.9 398.9 L346.2 399.3 L347.5 400.3 L348.8 400.0 L350.1 399.9 L351.4 399.4 L352.7 399.0 L354.0 399.7 L355.3 398.9 L356.6 399.0 L357.9 399.3 L359.2 398.8 L360.5 399.3 L361.8 400.0 L362.9 399.5 L363.3 426.0 L364.3 451.0 L365.7 451.0 L366.3 426.0 L367.5 399.0 L368.8 399.8 L370.1 399.5 L371.4 399.7 L372.7 399.4 L374.0 398.9 L375.3 399.7 L376.6 399.3 L377.9 399.9 L379.2 400.2 L380.5 399.4 L381.8 399.6 L383.1 399.9 L384.4 399.4 L385.7 399.1 L387.0 399.9 L388.3 400.1 L389.6 399.9 L390.9 399.8 L392.2 400.1 L393.5 399.8 L394.8 399.7 L396.1 399.4 L397.4 399.2 L398.7 399.7 L400.0 398.9 L401.3 399.4 L402.6 400.0 L403.9 399.8 L405.2 399.7 L405.7 399.5 L406.1 426.0 L407.1 451.0 L408.5 451.0 L409.1 426.0 L410.3 399.0 L411.6 399.1 L412.9 399.4 L414.2 399.4 L415.5 399.7 L416.8 399.4 L418.1 399.8 L419.4 400.2 L420.7 399.0 L422.0 399.7 L423.3 399.9 L424.6 399.3 L425.9 399.5 L427.2 400.3 L428.5 398.8 L429.8 399.6 L431.1 399.0 L432.4 400.0 L433.7 400.2 L435.0 399.5 L436.3 398.9 L437.6 399.6 L438.9 399.6 L440.2 399.8 L441.5 399.5 L442.8 399.7 L444.1 400.0 L445.4 399.5 L446.7 399.4 L448.0 400.2 L449.1 399.5 L449.5 426.0 L450.5 451.0 L451.9 451.0 L452.5 426.0 L453.7 399.0 L455.0 399.0 L456.3 399.8 L457.6 399.3 L458.9 399.9 L460.2 398.9 L461.5 400.3 L462.8 399.3 L464.1 398.8 L465.4 399.1 L466.7 399.3 L468.0 398.7 L469.3 399.4 L470.6 399.4 L471.9 399.8 L473.2 399.3 L474.5 399.1 L475.8 399.1 L477.1 399.9 L478.4 400.2 L479.7 399.5 L481.0 399.1 L482.3 400.0 L483.6 399.3 L484.9 399.0 L486.2 398.9 L487.5 399.9 L488.8 400.0 L490.1 399.7 L491.1 399.5 L491.5 426.0 L492.5 451.0 L493.9 451.0 L494.5 426.0 L495.7 399.0 L497.0 399.5 L498.3 399.6 L499.6 399.1 L500.9 400.2 L502.2 399.3 L503.5 399.7 L504.8 400.0 L506.1 400.0 L507.4 399.4 L508.7 399.2 L510.0 399.6 L511.3 398.9 L512.6 400.0 L513.9 399.3 L515.2 400.1 L516.5 399.1 L517.8 399.3 L519.1 399.1 L520.4 399.4 L521.7 399.0 L523.0 398.7 L524.3 399.9 L525.6 399.1 L526.9 399.1 L528.2 399.2 L529.5 399.5 L530.8 399.4 L532.1 399.7 L533.4 399.8 L534.5 399.5 L534.9 426.0 L535.9 451.0 L537.3 451.0 L537.9 426.0 L539.1 399.0 L540.4 399.3 L541.7 400.2 L543.0 400.1 L544.3 398.8 L545.6 400.0 L546.9 400.1 L548.2 400.0 L549.5 398.9 L550.8 400.0 L552.1 399.7 L553.4 398.7 L554.7 398.7 L556.0 400.2 L557.3 399.7 L558.6 399.1 L559.9 398.9 L561.2 398.9 L562.5 399.1 L563.8 399.9 L565.1 399.3 L566.4 398.9 L567.7 400.1 L569.0 400.0 L570.3 399.0 L571.6 400.1 L572.9 399.7 L574.2 400.0 L575.5 399.8 L576.8 400.1 L577.4 399.5 L577.8 426.0 L578.8 451.0 L580.2 451.0 L580.8 426.0 L582.0 399.0 L583.3 400.0 L584.6 400.0 L585.9 399.0 L587.2 399.8 L588.5 399.5 L589.8 399.9 L591.1 399.4 L592.4 400.1 L593.7 399.6 L595.0 399.1 L596.3 399.1 L597.6 398.9 L598.9 399.5 L600.2 398.8 L601.5 399.4 L602.8 398.9 L604.1 399.5 L605.4 399.5 L606.7 399.6 L608.0 400.1 L609.3 398.7 L610.6 400.0 L611.9 399.4 L613.2 399.6 L614.5 399.8 L615.8 400.0 L617.1 399.3 L618.4 399.4 L619.7 400.2 L620.3 399.5 L620.7 426.0 L621.7 451.0 L623.1 451.0 L623.7 426.0 L624.9 399.0 L626.2 398.8 L627.5 399.7 L628.8 399.7 L630.1 398.7 L631.4 399.7 L632.7 399.8 L634.0 400.2 L635.3 399.2 L636.6 400.3 L637.9 399.5 L639.2 399.5 L640.5 400.1 L641.8 398.8 L643.1 399.8 L644.4 399.7 L645.7 399.2 L647.0 400.1 L648.3 399.3 L649.6 399.5 L650.9 399.5 L652.2 399.9 L653.5 399.0 L654.8 399.4 L656.1 399.4 L657.4 399.6 L658.7 400.0 L660.0 399.2 L661.3 400.0 L662.6 399.3 L664.0 399.5 L664.4 426.0 L665.4 451.0 L666.8 451.0 L667.4 426.0 L668.6 399.0 L669.9 399.5 L671.2 399.1 L672.5 399.5 L673.8 400.3 L675.1 399.7 L676.4 400.0 L677.7 399.2 L679.0 399.2 L680.3 399.2 L681.6 399.6 L682.9 399.7 L684.2 400.0 L685.5 398.8 L686.8 399.9 L688.1 400.1 L689.4 399.6 L690.7 398.8 L692.0 399.2 L693.3 398.7 L694.6 399.0 L695.9 400.2 L697.2 399.7 L698.5 399.8 L699.8 400.0 L700.5 399.5" stroke="#4a4a4a" stroke-width="1" fill="none"/>
<text x="148.5" y="468" text-anchor="middle" class="ta">A</text>
<text x="236" y="468" text-anchor="middle" class="tb">B</text>
<text class="lbl" x="40.5" y="110">+8V</text>
<text class="lbl" x="40.5" y="181.6">-2V</text>
<text class="lbl" x="208" y="110" text-anchor="middle">CKPS</text>
<text class="lbl" x="283.5" y="110">Max : 5.96 V</text>
<text class="lbl" x="401.5" y="110">Avg : 2.09 V</text>
<text class="lbl" x="520" y="110">Min : -2.07 V</text>
<rect x="639" y="103.5" width="12" height="11.5" fill="#fff" stroke="#5f82c4" stroke-width="1.2"/>
<rect x="654.5" y="101.5" width="19" height="18" rx="1.5" fill="#d3d8e4" stroke="#bfc6d6" stroke-width="1"/>
<rect x="656.0" y="103.0" width="16" height="15" rx="1" fill="#e3e6ee"/>
<circle cx="655.0" cy="102.0" r="1.15" fill="#4b66a0"/>
<circle cx="673.0" cy="102.0" r="1.15" fill="#4b66a0"/>
<circle cx="655.0" cy="119.0" r="1.15" fill="#4b66a0"/>
<circle cx="673.0" cy="119.0" r="1.15" fill="#4b66a0"/>
<path d="M658.5 110.5H669.5M664.0 105.0V116.0" stroke="#9a9eab" stroke-width="3.4" fill="none"/>
<rect x="676" y="101.5" width="19" height="18" rx="1.5" fill="#d3d8e4" stroke="#bfc6d6" stroke-width="1"/>
<rect x="677.5" y="103.0" width="16" height="15" rx="1" fill="#e3e6ee"/>
<circle cx="676.5" cy="102.0" r="1.15" fill="#4b66a0"/>
<circle cx="694.5" cy="102.0" r="1.15" fill="#4b66a0"/>
<circle cx="676.5" cy="119.0" r="1.15" fill="#4b66a0"/>
<circle cx="694.5" cy="119.0" r="1.15" fill="#4b66a0"/>
<path d="M679.5 105.0L691.5 116.0M691.5 105.0L679.5 116.0" stroke="#b0b4c0" stroke-width="1.9" fill="none"/>
<text class="lbl" x="40.5" y="204.4">+8V</text>
<text class="lbl" x="40.5" y="276.0">-2V</text>
<text class="lbl" x="208" y="204.4" text-anchor="middle">CMPS-IN</text>
<text class="lbl" x="283.5" y="204.4">Max : 4.87 V</text>
<text class="lbl" x="401.5" y="204.4">Avg : 4.62 V</text>
<text class="lbl" x="520" y="204.4">Min : 0.00 V</text>
<rect x="639" y="197.9" width="12" height="11.5" fill="#fff" stroke="#5f82c4" stroke-width="1.2"/>
<rect x="654.5" y="195.9" width="19" height="18" rx="1.5" fill="#d3d8e4" stroke="#bfc6d6" stroke-width="1"/>
<rect x="656.0" y="197.4" width="16" height="15" rx="1" fill="#e3e6ee"/>
<circle cx="655.0" cy="196.4" r="1.15" fill="#4b66a0"/>
<circle cx="673.0" cy="196.4" r="1.15" fill="#4b66a0"/>
<circle cx="655.0" cy="213.4" r="1.15" fill="#4b66a0"/>
<circle cx="673.0" cy="213.4" r="1.15" fill="#4b66a0"/>
<path d="M658.5 204.9H669.5M664.0 199.4V210.4" stroke="#9a9eab" stroke-width="3.4" fill="none"/>
<rect x="676" y="195.9" width="19" height="18" rx="1.5" fill="#d3d8e4" stroke="#bfc6d6" stroke-width="1"/>
<rect x="677.5" y="197.4" width="16" height="15" rx="1" fill="#e3e6ee"/>
<circle cx="676.5" cy="196.4" r="1.15" fill="#4b66a0"/>
<circle cx="694.5" cy="196.4" r="1.15" fill="#4b66a0"/>
<circle cx="676.5" cy="213.4" r="1.15" fill="#4b66a0"/>
<circle cx="694.5" cy="213.4" r="1.15" fill="#4b66a0"/>
<path d="M679.5 199.4L691.5 210.4M691.5 199.4L679.5 210.4" stroke="#b0b4c0" stroke-width="1.9" fill="none"/>
<text class="lbl" x="40.5" y="298.8">+8V</text>
<text class="lbl" x="40.5" y="370.4">-2V</text>
<text class="lbl" x="208" y="298.8" text-anchor="middle">CMPS-EX</text>
<text class="lbl" x="283.5" y="298.8">Cur A : 4.70 V</text>
<text class="lbl" x="401.5" y="298.8">Avg : 4.74 V</text>
<text class="lbl" x="520" y="298.8">Cur B : 4.77 V</text>
<rect x="639" y="292.3" width="12" height="11.5" fill="#fff" stroke="#5f82c4" stroke-width="1.2"/>
<rect x="654.5" y="290.3" width="19" height="18" rx="1.5" fill="#d3d8e4" stroke="#bfc6d6" stroke-width="1"/>
<rect x="656.0" y="291.8" width="16" height="15" rx="1" fill="#e3e6ee"/>
<circle cx="655.0" cy="290.8" r="1.15" fill="#4b66a0"/>
<circle cx="673.0" cy="290.8" r="1.15" fill="#4b66a0"/>
<circle cx="655.0" cy="307.8" r="1.15" fill="#4b66a0"/>
<circle cx="673.0" cy="307.8" r="1.15" fill="#4b66a0"/>
<path d="M658.5 299.3H669.5M664.0 293.8V304.8" stroke="#9a9eab" stroke-width="3.4" fill="none"/>
<rect x="676" y="290.3" width="19" height="18" rx="1.5" fill="#d3d8e4" stroke="#bfc6d6" stroke-width="1"/>
<rect x="677.5" y="291.8" width="16" height="15" rx="1" fill="#e3e6ee"/>
<circle cx="676.5" cy="290.8" r="1.15" fill="#4b66a0"/>
<circle cx="694.5" cy="290.8" r="1.15" fill="#4b66a0"/>
<circle cx="676.5" cy="307.8" r="1.15" fill="#4b66a0"/>
<circle cx="694.5" cy="307.8" r="1.15" fill="#4b66a0"/>
<path d="M679.5 293.8L691.5 304.8M691.5 293.8L679.5 304.8" stroke="#b0b4c0" stroke-width="1.9" fill="none"/>
<text class="lbl" x="40.5" y="393.1">+20V</text>
<text class="lbl" x="40.5" y="464.70000000000005">-5V</text>
<text class="lbl" x="208" y="393.1" text-anchor="middle">OCV-IN</text>
<text class="lbl" x="283.5" y="393.1">Hz : 255.1 Hz</text>
<text class="lbl" x="401.5" y="393.1">Duty- : 6 %</text>
<text class="lbl" x="520" y="393.1">Duty+ : 94 %</text>
<rect x="639" y="386.6" width="12" height="11.5" fill="#fff" stroke="#5f82c4" stroke-width="1.2"/>
<rect x="654.5" y="384.6" width="19" height="18" rx="1.5" fill="#d3d8e4" stroke="#bfc6d6" stroke-width="1"/>
<rect x="656.0" y="386.1" width="16" height="15" rx="1" fill="#e3e6ee"/>
<circle cx="655.0" cy="385.1" r="1.15" fill="#4b66a0"/>
<circle cx="673.0" cy="385.1" r="1.15" fill="#4b66a0"/>
<circle cx="655.0" cy="402.1" r="1.15" fill="#4b66a0"/>
<circle cx="673.0" cy="402.1" r="1.15" fill="#4b66a0"/>
<path d="M658.5 393.6H669.5M664.0 388.1V399.1" stroke="#9a9eab" stroke-width="3.4" fill="none"/>
<rect x="676" y="384.6" width="19" height="18" rx="1.5" fill="#d3d8e4" stroke="#bfc6d6" stroke-width="1"/>
<rect x="677.5" y="386.1" width="16" height="15" rx="1" fill="#e3e6ee"/>
<circle cx="676.5" cy="385.1" r="1.15" fill="#4b66a0"/>
<circle cx="694.5" cy="385.1" r="1.15" fill="#4b66a0"/>
<circle cx="676.5" cy="402.1" r="1.15" fill="#4b66a0"/>
<circle cx="694.5" cy="402.1" r="1.15" fill="#4b66a0"/>
<path d="M679.5 388.1L691.5 399.1M691.5 388.1L679.5 399.1" stroke="#b0b4c0" stroke-width="1.9" fill="none"/></svg>
</div>
</body></html>
